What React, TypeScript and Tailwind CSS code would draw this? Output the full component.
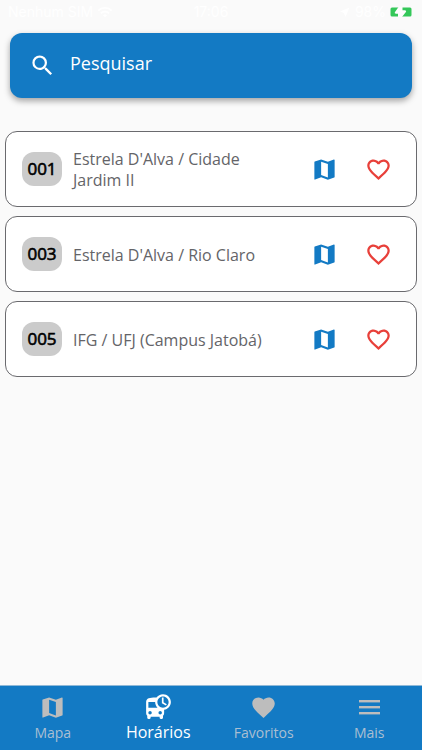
import React, { useState } from "react";
import {
  MdDepartureBoard,
  MdFavorite,
  MdFavoriteBorder,
  MdMap,
  MdNearMe,
  MdSearch,
  MdWifi,
} from "react-icons/md";

interface Line {
  code: string;
  name: string;
}

interface Tab {
  label: string;
  icon: React.ComponentType<{ className?: string }>;
}

const MenuIcon = ({ className }: { className?: string }) => (
  <svg viewBox="0 0 27 27" className={className} fill="currentColor" aria-hidden="true">
    <rect x="3" y="6" width="21" height="2.4" />
    <rect x="3" y="12" width="21" height="2.4" />
    <rect x="3" y="18" width="21" height="2.4" />
  </svg>
);

const lines: Line[] = [
  { code: "001", name: "Estrela D'Alva / Cidade Jardim II" },
  { code: "003", name: "Estrela D'Alva / Rio Claro" },
  { code: "005", name: "IFG / UFJ (Campus Jatobá)" },
];

const tabs: Tab[] = [
  { label: "Mapa", icon: MdMap },
  { label: "Horários", icon: MdDepartureBoard },
  { label: "Favoritos", icon: MdFavorite },
  { label: "Mais", icon: MenuIcon },
];

const StatusBar = () => (
  <div className="grid grid-cols-3 items-center h-6 px-2 text-sm font-['Inter',sans-serif] text-white">
    <div className="flex items-center gap-1">
      <span>Nenhum SIM</span>
      <MdWifi className="w-4 h-4" />
    </div>
    <span className="text-center">17:06</span>
    <div className="flex items-center justify-end gap-1 pr-0.5">
      <MdNearMe className="w-3 h-3" />
      <span>98%</span>
      <svg viewBox="0 0 22 10" className="w-[22px] h-2.5 shrink-0" aria-hidden="true">
        <rect x="0.5" y="0.5" width="21" height="9" rx="1.5" fill="#34c759" />
        <path
          d="M8.5 0h4v3.2h2.2c1.5 0 1.9 1 1 2L12 10H8V6.8H6.2c-1.5 0-1.9-1-1-2z"
          fill="#fdfdfd"
        />
      </svg>
    </div>
  </div>
);

const LineCard = ({ line }: { line: Line }) => {
  const [favorite, setFavorite] = useState(false);
  const Heart = favorite ? MdFavorite : MdFavoriteBorder;

  return (
    <li className="flex items-center min-h-[76px] pl-4 pr-6 bg-white border border-[#6a6a6e] rounded-xl">
      <span className="flex items-center justify-center w-10 h-[34px] shrink-0 rounded-xl bg-[#cbcbcb] text-[17px] text-black [-webkit-text-stroke:0.6px_black]">
        {line.code}
      </span>
      <span className="flex-1 ml-[11px] mr-10 pt-0.5 text-base leading-[21px] text-[#646468]">
        {line.name}
      </span>
      <button
        type="button"
        aria-label={`Ver ${line.name} no mapa`}
        className="text-[#137ac4]"
      >
        <MdMap className="w-[27px] h-[27px]" />
      </button>
      <button
        type="button"
        aria-label={`Favoritar ${line.name}`}
        aria-pressed={favorite}
        onClick={() => setFavorite(!favorite)}
        className="ml-[27px] text-[#e8403a]"
      >
        <Heart className="w-[27px] h-[27px]" />
      </button>
    </li>
  );
};

const App = () => {
  const [search, setSearch] = useState("");
  const [activeTab, setActiveTab] = useState("Horários");

  const filtered = lines.filter((line) =>
    `${line.code} ${line.name}`.toLowerCase().includes(search.toLowerCase())
  );

  return (
    <div className="flex flex-col min-h-screen bg-[#fafafa] font-['Open_Sans',sans-serif]">
      <StatusBar />

      <label className="flex items-center h-[65px] mx-2.5 mt-[9px] pl-[19px] pr-4 rounded-xl bg-[#137ac4] text-white shadow-[0_3px_6px_rgba(0,0,0,0.35)]">
        <MdSearch className="w-[27px] h-[27px] shrink-0" />
        <input
          type="text"
          aria-label="Pesquisar"
          placeholder="Pesquisar"
          value={search}
          onChange={(e) => setSearch(e.target.value)}
          className="flex-1 min-w-0 ml-3.5 pb-1.5 bg-transparent text-lg placeholder:text-white outline-none"
        />
      </label>

      <main className="flex-1 px-[5px] pt-[33px] pb-4">
        <ul className="flex flex-col gap-[9px]">
          {filtered.map((line) => (
            <LineCard key={line.code} line={line} />
          ))}
        </ul>
      </main>

      <nav className="grid grid-cols-4 h-[65px] bg-[#137ac4] border-t border-[#8fb9d8]">
        {tabs.map(({ label, icon: Icon }) => {
          const active = label === activeTab;
          return (
            <button
              key={label}
              type="button"
              aria-current={active ? "page" : undefined}
              onClick={() => setActiveTab(label)}
              className={`flex flex-col items-center gap-0.5 leading-5 ${
                active ? "pt-[7px] text-base text-white" : "pt-2 text-sm text-[#bdbdbd]"
              }`}
            >
              <Icon className="w-[27px] h-[27px]" />
              <span className={active ? "" : "text-[#aabfd2]"}>{label}</span>
            </button>
          );
        })}
      </nav>
    </div>
  );
};

export default App;
